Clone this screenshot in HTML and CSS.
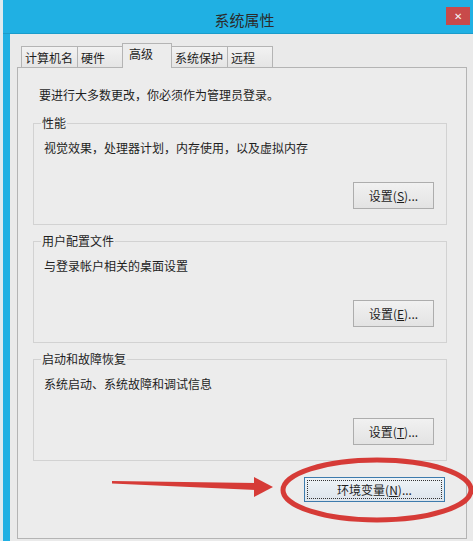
FILE: index.html
```html
<!DOCTYPE html>
<html lang="zh-CN">
  <head>
    <meta charset="UTF-8" />
    <meta name="viewport" content="width=device-width, initial-scale=1.0" />
    <title>系统属性</title>
    <link rel="stylesheet" href="styles.css">
  </head>
  <body>
    <div class="window">
      <div class="titlebar">
        <span class="title">系统属性</span>
        <span class="close">&#x2715;</span>
      </div>
      <div class="client">
        <div class="tabs">
          <span class="tab">计算机名</span>
          <span class="tab">硬件</span>
          <span class="tab active">高级</span>
          <span class="tab">系统保护</span>
          <span class="tab">远程</span>
        </div>
        <div class="panel">
          <p class="note">要进行大多数更改，你必须作为管理员登录。</p>

          <fieldset class="group">
            <legend>性能</legend>
            <p class="desc">视觉效果，处理器计划，内存使用，以及虚拟内存</p>
            <div class="actions">
              <button class="btn">设置(<u>S</u>)...</button>
            </div>
          </fieldset>

          <fieldset class="group">
            <legend>用户配置文件</legend>
            <p class="desc">与登录帐户相关的桌面设置</p>
            <div class="actions">
              <button class="btn">设置(<u>E</u>)...</button>
            </div>
          </fieldset>

          <fieldset class="group">
            <legend>启动和故障恢复</legend>
            <p class="desc">系统启动、系统故障和调试信息</p>
            <div class="actions">
              <button class="btn">设置(<u>T</u>)...</button>
            </div>
          </fieldset>

          <div class="actions env-row">
            <button class="btn btn-env"><span class="focus-ring">环境变量(<u>N</u>)...</span></button>
          </div>
        </div>
      </div>

      <!-- red annotation drawn over the dialog -->
      <svg class="markup" width="473" height="541" viewBox="0 0 473 541">
        <polygon points="112,481 257,483 257,490 112,483.5" fill="#d63b37" />
        <polygon points="254,477 273,487 254,497" fill="#d63b37" />
        <ellipse cx="377" cy="490" rx="94" ry="30" fill="none" stroke="#d63b37" stroke-width="5" />
      </svg>
    </div>
  </body>
</html>
```

FILE: styles.css
```css
* {
  margin: 0;
  padding: 0;
  box-sizing: border-box;
}

body {
  font-family: "Noto Sans CJK SC", "Noto Sans", sans-serif;
  font-size: 12px;
  line-height: 16px;
  color: #1e1e1e;
  background-color: #dfeaef;
  width: 473px;
  height: 541px;
  overflow: hidden;
}

/* Bingkai jendela */
.window {
  position: relative;
  margin-left: 3px;
  width: 470px;
  height: 541px;
  background-color: #20b0e3;
  display: flex;
  flex-direction: column;
}

.titlebar {
  height: 34px;
  display: flex;
  align-items: flex-start;
  border-bottom: 1px solid #1a9ccb;
}

.title {
  flex: 1;
  text-align: center;
  padding: 10px 0 0 40px;
  font-size: 15px;
  line-height: 20px;
  color: #2b2b2b;
}

.close {
  width: 24px;
  height: 18px;
  margin: 7px 3px 0 0;
  background-color: #c84a4a;
  color: #f4f4f4;
  font-size: 10px;
  line-height: 18px;
  text-align: center;
}

.client {
  flex: 1;
  margin-left: 7px;
  padding: 9px 6px 2px 7px;
  background-color: #eaeaea;
  display: flex;
  flex-direction: column;
}

/* Tab */
.tabs {
  height: 25px;
  margin-bottom: -1px;
  padding-left: 4px;
  display: flex;
  align-items: flex-end;
}

.tab {
  min-width: 46px;
  height: 22px;
  padding: 3px 4px 0 3px;
  margin-right: -1px;
  border: 1px solid #b4b4b4;
  border-bottom: none;
  background: linear-gradient(#f2f2f2, #e4e4e4);
  white-space: nowrap;
}

.tab.active {
  position: relative;
  z-index: 1;
  min-width: 50px;
  height: 25px;
  padding: 2px 4px 0 6px;
  background: #ececec;
}

.panel {
  flex: 1;
  border: 1px solid #b4b4b4;
  background-color: #ececec;
  padding: 19px 19px 0 15px;
}

.note {
  margin-left: 6px;
}

/* Kotak grup */
.group {
  margin-top: 8px;
  border: 1px solid #d2d2d2;
  padding: 0 12px 15px 7px;
  min-width: 0;
}

.note + .group {
  margin-top: 12px;
}

.group legend {
  padding: 0 1px;
}

.desc {
  margin: 9px 0 0 3px;
}

.actions {
  display: flex;
  justify-content: flex-end;
  margin-top: 26px;
}

.btn {
  width: 81px;
  height: 27px;
  font-family: inherit;
  font-size: 12px;
  color: #1e1e1e;
  border: 1px solid #adadad;
  background: linear-gradient(#f1f1f1, #e3e3e3);
}

.env-row {
  margin-top: 16px;
  margin-right: 2px;
}

.btn-env {
  width: 141px;
  height: 25px;
  padding: 2px;
  border-color: #3d7bad;
  background: linear-gradient(#eef3f7, #dde5ec);
}

.focus-ring {
  display: block;
  height: 100%;
  line-height: 18px;
  border: 1px dotted #333;
}

.markup {
  position: absolute;
  top: 0;
  left: -3px;
  pointer-events: none;
}
```
